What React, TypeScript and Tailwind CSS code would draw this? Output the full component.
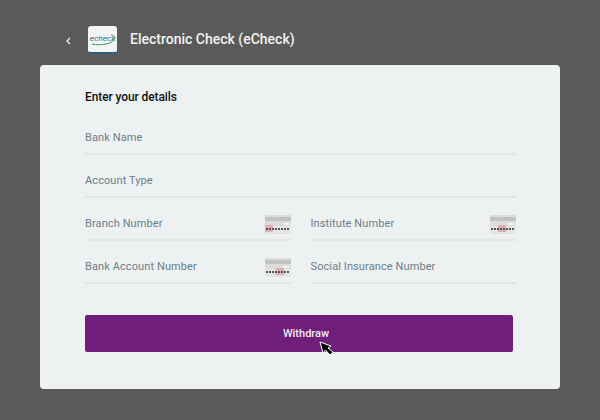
const font = { fontFamily: "Roboto, sans-serif" };

function CheckIcon({ red = 0 }: { red?: number }) {
  return (
    <svg width="26" height="19" viewBox="0 0 26 19" className="shrink-0">
      <rect width="26" height="19" fill="#dcdcdc" />
      <rect y="2" width="26" height="4" fill="#c2c2c2" />
      <rect x="18" y="8" width="6" height="2" fill="#f4f4f4" />
      <rect y="11" width="26" height="8" fill="#e6e4e4" />
      <rect x={red} y="10" width="8" height="7" fill="#dcb0b0" />
      <path d="M1 14 H25" stroke="#555" strokeWidth="2" strokeDasharray="2 1" />
    </svg>
  );
}

function Field({ label, icon, red, className = "" }: { label: string; icon?: boolean; red?: number; className?: string }) {
  return (
    <div className={`h-[43px] flex items-center justify-between border-b-2 border-[#e2e6e8] pt-[12px] ${className}`}>
      <span className="text-[11px] text-[#6c7e88] tracking-[0.1px]">{label}</span>
      {icon && <CheckIcon red={red} />}
    </div>
  );
}

export default function App() {
  return (
    <div className="w-[600px] h-[420px] bg-[#5a5a5a] overflow-hidden pt-[26px] pl-[40px] pr-[40px]" style={font}>
      <div className="flex items-center h-[28px] pl-[25px]">
        <svg width="7" height="8" viewBox="0 0 7 8" fill="none" stroke="#f0f0f0" strokeWidth="1.3" className="mt-[2px]">
          <path d="M5 1 L2 4 L5 7" />
        </svg>
        <div className="relative ml-[16px] w-[29px] h-[28px] rounded-[3px] bg-[#f3f5f4] border-b-2 border-[#2f5d7c] flex items-center justify-center">
          <span className="text-[8px] italic text-[#2c5f8a] leading-none" style={{ fontFamily: "Liberation Sans, sans-serif" }}>echeck</span>
          <svg width="27" height="12" viewBox="0 0 27 12" fill="none" className="absolute left-[1px] top-[8px]">
            <path d="M3 10 C12 12 24 10 26 4 C26 2 24 1 22 1" stroke="#3d9a6a" strokeWidth="1" />
          </svg>
        </div>
        <span className="ml-[13px] mb-[2px] text-[14px] font-medium text-[#f2f2f2]">Electronic Check (eCheck)</span>
      </div>

      <div className="mt-[11px] h-[324px] rounded-[4px] bg-[#edf1f2] pt-[24px] pl-[45px] pr-[44px]">
        <h2 className="text-[12px] leading-[16px] font-medium text-[#111] tracking-[-0.1px]">Enter your details</h2>
        <div className="mt-[7px] flex flex-col">
          <Field label="Bank Name" />
          <Field label="Account Type" />
          <div className="grid grid-cols-2 gap-x-[20px]">
            <Field label="Branch Number" icon />
            <Field label="Institute Number" icon red={8} />
          </div>
          <div className="grid grid-cols-2 gap-x-[20px]">
            <Field label="Bank Account Number" icon red={11} />
            <Field label="Social Insurance Number" />
          </div>
        </div>
        <div className="relative mt-[31px] w-[428px] h-[37px] rounded-[2px] bg-[#6f1f7a] flex items-center justify-center pl-[14px] pt-[1px]">
          <span className="text-[11px] font-medium text-[#f4eaf5]">Withdraw</span>
          <svg width="16" height="16" viewBox="0 0 16 16" className="absolute left-[234px] top-[26px]">
            <path d="M1 1 L4 12 L6.5 9 L11 14 L14 11 L9 7 L12 5 Z" fill="#000" stroke="#fff" strokeWidth="1" />
          </svg>
        </div>
      </div>
    </div>
  );
}
